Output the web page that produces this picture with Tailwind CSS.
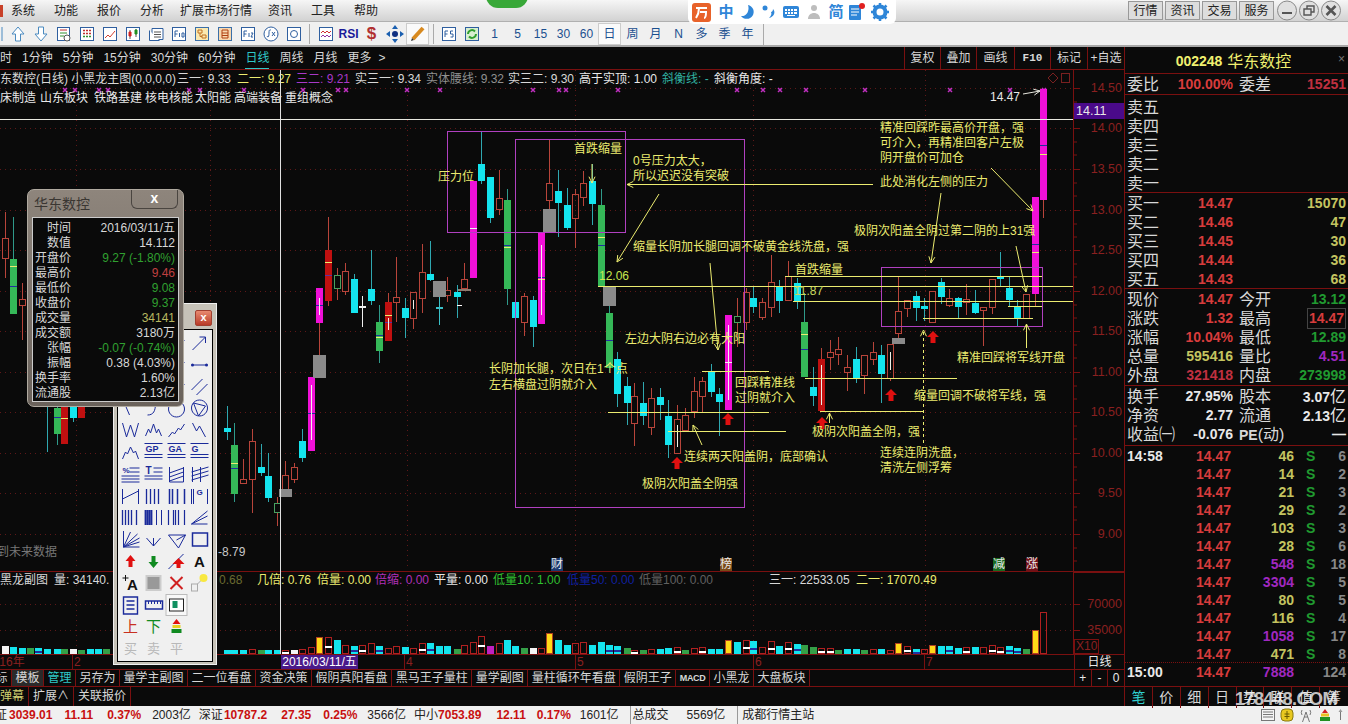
<!DOCTYPE html>
<html lang="zh">
<head>
    <meta charset="UTF-8">
    <title>华东数控</title>
    <script src="https://cdn.jsdelivr.net/npm/@tailwindcss/browser@4"></script>
</head>
<body class="relative w-[1348px] h-[724px] overflow-hidden bg-[#0a0a0a] text-[12px] text-[#d8d8d8] font-['Liberation_Sans','Noto_Sans_CJK_SC',sans-serif]">

    <!-- title bar -->
    <div class="relative h-[22px] flex items-center bg-linear-to-b from-[#f6f6f6] to-[#d2d2d2] text-[#222] border-b border-[#b0b0b0]">
        <div class="w-[3px] h-[12px] bg-[#c84028]"></div>
        <div class="flex ml-[8px] gap-[19px]">
            <span>系统</span><span>功能</span><span>报价</span><span>分析</span><span class="-ml-[3px] -mr-[3px]">扩展市场行情</span><span>资讯</span><span>工具</span><span>帮助</span>
        </div>
        <div class="absolute left-[486px] -top-[16px] w-[42px] h-[24px] rounded-full bg-[#38a838]"></div>
        <div class="ml-auto flex items-center gap-[2px] pr-[5px]">
            <span class="w-[35px] h-[19px] flex items-center justify-center border border-[#999] bg-[#ddd]">行情</span>
            <span class="w-[35px] h-[19px] flex items-center justify-center border border-[#999] bg-[#ddd]">资讯</span>
            <span class="w-[35px] h-[19px] flex items-center justify-center border border-[#999] bg-[#ddd]">交易</span>
            <span class="w-[35px] h-[19px] flex items-center justify-center border border-[#999] bg-[#ddd]">服务</span>
            <svg class="ml-[1px]" width="66" height="21" viewBox="0 0 66 21" fill="none">
                <circle cx="10" cy="10.5" r="9.5" fill="#e0e0e0" stroke="#888"/><path d="M5 13h10" stroke="#555" stroke-width="2"/>
                <circle cx="32" cy="10.5" r="9.5" fill="#e0e0e0" stroke="#888"/><path d="M27 9h7v6h-7zM30 9V6h7v6h-3" stroke="#555" stroke-width="1.4"/>
                <circle cx="54" cy="10.5" r="9.5" fill="#e0e0e0" stroke="#888"/><path d="M49.5 6l9 9M58.500 6l-9 9" stroke="#555" stroke-width="2.600"/>
            </svg>
        </div>
    </div>

    <!-- toolbar -->
    <div class="h-[25px] flex items-center bg-[#f0f0f0] border-b-2 border-[#a8a8a8] text-[#1a4f8f] -ml-[17px] w-[1365px]">
        <div class="w-[23px] flex justify-center"><svg width="18" height="18" fill="none" stroke="#4a8ac0"><path d="M16 2v14"/></svg></div>
        <div class="w-[23px] flex justify-center"><svg width="18" height="18" fill="#fff" stroke="#4a8ac0"><path d="M9 2l6 7h-3.500v7h-5V9H3z"/></svg></div>
        <div class="w-[23px] flex justify-center"><svg width="18" height="18" fill="#fff" stroke="#4a8ac0"><path d="M9 16l6-7h-3.500V2h-5v7H3z"/></svg></div>
        <div class="w-[23px] flex justify-center"><svg width="18" height="18" fill="#fff" stroke="#2f5f9f"><rect x="2.500" y="2.500" width="12" height="13"/><path d="M5 5h7" stroke="#c03030"/><path d="M5 8h7M5 11h4" stroke="#309030"/><circle cx="12" cy="13" r="3" stroke="#555"/></svg></div>
        <div class="w-[23px] flex justify-center"><svg width="18" height="18" fill="#fff" stroke="#2f5f9f"><rect x="2.500" y="2.500" width="13" height="13"/><path d="M5 5.500h8M5 8.500h8" stroke="#c03030" stroke-width="1.500" stroke-dasharray="2 1"/><path d="M5 11.500h8" stroke="#309030" stroke-width="1.500" stroke-dasharray="2 1"/></svg></div>
        <div class="w-[23px] flex justify-center"><svg width="18" height="18" fill="#fff" stroke="#2f5f9f"><rect x="2.500" y="2.500" width="13" height="13"/><path d="M4 13l3-3 2 2 5-6" stroke="#d04030" fill="none"/></svg></div>
        <div class="w-[23px] flex justify-center"><svg width="18" height="18" fill="#fff" stroke="#2f5f9f"><rect x="2.500" y="2.500" width="13" height="13"/><path d="M6 5v9M12 4v8" stroke="#555"/><path d="M5 7h2v4H5z" fill="#d02020" stroke="#d02020"/><path d="M11 5h2v4h-2z" fill="#209020" stroke="#209020"/></svg></div>
        <div class="w-[23px] flex justify-center"><svg width="18" height="18" fill="#fff" stroke="#2f5f9f"><path d="M5 3.500h11v11H5z"/><path d="M2.500 5.500v10h10"/><path d="M7 7h7M7 9.500h7M7 12h7" stroke="#555"/></svg></div>
        <div class="w-[23px] flex justify-center"><svg width="18" height="18" fill="#fff" stroke="#2f5f9f"><rect x="2.500" y="2.500" width="13" height="13"/><path d="M5 12V6h3M5 9h2.500M9.500 12V8M12 8v4h2V8z" stroke-width="1"/></svg></div>
        <div class="w-[23px] flex justify-center"><svg width="18" height="18" fill="#fbe9b0" stroke="#3a6fa8"><rect x="2.500" y="2.500" width="13" height="13"/><path d="M5 5h4v3H5zM9 10h4v3H9zM7 8v3.500h2" stroke="#c07020"/></svg></div>
        <div class="w-[23px] flex justify-center"><svg width="18" height="18" fill="#f8d8b0" stroke="#3a6fa8"><rect x="2.500" y="2.500" width="13" height="13"/><path d="M6 5h6v8H6zM6 8h6M6 10.500h6" stroke="#b04010" fill="none"/></svg></div>
        <div class="w-[23px] flex justify-center"><svg width="18" height="18" fill="#fff" stroke="#2f5f9f"><rect x="2.500" y="2.500" width="13" height="13"/><path d="M5 12V6h3M5 9h2.500M10 12V8M12 8h2l-2 4h2" stroke-width="1"/></svg></div>
        <div class="w-[23px] flex justify-center"><svg width="18" height="18" fill="#fff" stroke="#2f5f9f"><circle cx="9" cy="9" r="7"/><path d="M5 11c1 2 2 1 2-3s1-3 2-3M10 7l3 4M13 7l-3 4" fill="none" stroke-width="1"/></svg></div>
        <div class="w-[23px] flex justify-center"><svg width="18" height="18" fill="#fff" stroke="#2f5f9f"><rect x="2.500" y="2.500" width="13" height="13"/><circle cx="9" cy="9" r="3.500"/></svg></div>
        <div class="w-[9px] h-[20px] flex justify-center"><div class="w-px h-full bg-[#aaa]"></div></div>
        <div class="w-[23px] flex justify-center"><svg width="18" height="18" fill="#fff" stroke="#2f5f9f"><rect x="2.500" y="2.500" width="13" height="13"/><path d="M4 8l2-2 2 2 2-2 2 2 2-2" stroke="#d03030" fill="none"/><path d="M4 12l2-2 2 2 2-2 2 2 2-2" stroke="#9030a0" fill="none"/></svg></div>
        <div class="w-[23px] flex justify-center text-[12px] font-bold text-[#1a1a9a]">RSI</div>
        <div class="w-[23px] flex justify-center text-[17px] font-bold leading-none text-[#b03030]">$</div>
        <div class="w-[23px] flex justify-center"><svg width="20" height="20" fill="#1a5fb0"><path d="M10 1l3 4H7zM10 19l3-4H7zM1 10l4-3v6zM19 10l-4-3v6z"/><circle cx="10" cy="10" r="3" fill="#102f80"/></svg></div>
        <div class="w-[23px] h-[22px] flex justify-center items-center bg-[#fafafa] border border-[#ccc]"><svg width="18" height="18" fill="none"><path d="M4 14L14 3" stroke="#d88a20" stroke-width="4"/><path d="M2 16l1-3 2 2z" fill="#333"/></svg></div>
        <div class="w-[8px] h-[20px] flex justify-center"><div class="w-px h-full bg-[#aaa]"></div></div>
        <div class="w-[23px] flex justify-center"><svg width="18" height="18" fill="#fff" stroke="#2f5f9f"><rect x="2.500" y="2.500" width="13" height="13"/><path d="M5 12V6h3M5 9h2.500M13 6h-2.500v3H13v3h-2.500" stroke-width="1"/></svg></div>
        <div class="w-[23px] flex justify-center"><svg width="18" height="18" fill="#d8efd0" stroke="#2f5f9f"><rect x="2.500" y="2.500" width="13" height="13"/><path d="M5 9a4 4 0 0 1 7-2.500M13 9a4 4 0 0 1-7 2.500" stroke="#30a030" stroke-width="2" fill="none"/></svg></div>
        <div class="w-[23px] text-center">1</div>
        <div class="w-[23px] text-center">5</div>
        <div class="w-[23px] text-center">15</div>
        <div class="w-[23px] text-center">30</div>
        <div class="w-[23px] text-center">60</div>
        <div class="w-[23px] h-[22px] flex items-center justify-center bg-[#fafafa] border border-[#ccc]">日</div>
        <div class="w-[23px] text-center">周</div>
        <div class="w-[23px] text-center">月</div>
        <div class="w-[23px] text-center">N</div>
        <div class="w-[23px] text-center">多</div>
        <div class="w-[23px] text-center">季</div>
        <div class="w-[23px] text-center">年</div>
        <div class="w-[8px] h-[24px] flex justify-center"><div class="w-px h-full bg-[#aaa]"></div></div>
    </div>

    <div class="flex h-[659px]">
        <!-- chart column -->
        <div class="w-[1124px] flex flex-col">
            <div class="h-[23px] flex items-center border-b border-[#7a1010] overflow-hidden shrink-0">
                <div class="flex items-center gap-[10px] -ml-[12px]">
                    <span>分时</span><span>1分钟</span><span>5分钟</span><span>15分钟</span><span>30分钟</span><span>60分钟</span>
                    <span class="text-[#30c8c8] border-b border-[#30c8c8] h-[22px] leading-[22px]">日线</span>
                    <span>周线</span><span>月线</span><span>更多</span><span class="-ml-[3px]">&gt;</span>
                </div>
                <div class="ml-auto flex h-full">
                    <span class="w-[36px] flex items-center justify-center border-l border-[#7a1010]">复权</span>
                    <span class="w-[36px] flex items-center justify-center border-l border-[#7a1010]">叠加</span>
                    <span class="w-[38px] flex items-center justify-center border-l border-[#7a1010]">画线</span>
                    <span class="w-[36px] flex items-center justify-center border-l border-[#7a1010] font-['Liberation_Mono',monospace] font-bold text-[11px]">F10</span>
                    <span class="w-[37px] flex items-center justify-center border-l border-[#7a1010]">标记</span>
                    <span class="w-[37px] flex items-center justify-center border-l border-[#7a1010]">+自选</span>
                </div>
            </div>
            <svg id="chart" class="block shrink-0" width="1124" height="584" viewBox="0 70 1124 584"></svg>
            <!-- date axis -->
            <div class="relative h-[16px] flex border-y border-[#7a1010] text-[#8a2020] shrink-0">
                <div class="w-[1074px] relative overflow-hidden">
                    <span class="absolute -left-[14px] top-0 leading-[15px]">2016年</span>
                    <span class="absolute left-[72px] top-0 leading-[15px] border-l border-[#7a1010] pl-[1px]">2</span>
                    <span class="absolute left-[281px] top-0 h-[15px] w-[77px] leading-[15px] bg-[#4a1a8a] text-white text-center">2016/03/11/五</span>
                    <span class="absolute left-[404px] top-0 leading-[15px] border-l border-[#7a1010] pl-[1px]">4</span>
                    <span class="absolute left-[575px] top-0 leading-[15px] border-l border-[#7a1010] pl-[1px]">5</span>
                    <span class="absolute left-[753px] top-0 leading-[15px] border-l border-[#7a1010] pl-[1px]">6</span>
                    <span class="absolute left-[924px] top-0 leading-[15px] border-l border-[#7a1010] pl-[1px]">7</span>
                </div>
                <div class="flex-1 border-l border-[#7a1010] text-center text-[#e8e8e8] leading-[15px]">日线</div>
            </div>
            <!-- tabs -->
            <div class="h-[17px] flex border-b border-[#7a1010] shrink-0 overflow-hidden">
                <div class="w-[1074px] overflow-hidden"><div class="flex -ml-[8px]" id="tabs"></div></div>
                <div class="flex flex-1 border-l border-[#7a1010] text-[#e8e8e8] text-center">
                    <span class="flex-1 border-r border-[#7a1010] leading-[16px]">+</span>
                    <span class="flex-1 border-r border-[#7a1010] leading-[16px]">-</span>
                    <span class="flex-1 leading-[16px]">0</span>
                </div>
            </div>
            <div class="flex-1 flex items-stretch overflow-hidden">
                <span class="pr-[4px] border-r border-[#7a1010] text-[#d0d070] leading-[18px]">弹幕</span>
                <span class="px-[4px] border-r border-[#7a1010] leading-[18px]">扩展∧</span>
                <span class="px-[4px] border-r border-[#7a1010] leading-[18px]">关联报价</span>
            </div>
        </div>

        <!-- quote panel -->
        <div class="flex-1 border-l border-[#7a1010] relative flex flex-col font-bold">
            <span class="absolute right-[3px] top-[3px] text-[#777] font-normal text-[12px]">×</span>
            <div class="h-[27px] pt-[3px] flex items-center justify-center text-[#f0f070] border-b border-[#7a1010] gap-[5px] pr-[6px] shrink-0">
                <span class="text-[14px]">002248</span><span class="text-[16px] font-normal">华东数控</span>
            </div>
            <div id="q1" class="h-[21px] pt-[1px] border-b border-[#7a1010] shrink-0"></div>
            <div id="q2" class="h-[98px] pt-[3px] border-b border-[#7a1010] shrink-0"></div>
            <div id="q3" class="h-[96px] pt-[1px] border-b border-[#7a1010] shrink-0"></div>
            <div id="q4" class="h-[97px] pt-[1px] border-b border-[#7a1010] shrink-0"></div>
            <div id="q5" class="h-[60px] pt-[1px] border-b border-[#7a1010] shrink-0"></div>
            <div id="trades" class="h-[217px] pt-[1px] border-b border-dotted border-[#7a1010] shrink-0"></div>
            <div id="lastTrade" class="h-[24px] border-b border-[#7a1010] shrink-0"></div>
            <div class="flex-1 grid grid-cols-8 font-normal text-[14px]">
                <span class="text-center text-[#30d0d0] border-r border-[#7a1010]">笔</span>
                <span class="text-center border-r border-[#7a1010]">价</span>
                <span class="text-center border-r border-[#7a1010]">细</span>
                <span class="text-center border-r border-[#7a1010]">日</span>
                <span class="text-center border-r border-[#7a1010]">势</span>
                <span class="text-center border-r border-[#7a1010]">联</span>
                <span class="text-center border-r border-[#7a1010]">值</span>
                <span class="text-center">筹</span>
            </div>
        </div>
    </div>

    <!-- status bar -->
    <div class="h-[18px] flex items-center bg-[#f0f0f0] text-[#222] whitespace-nowrap">
        <span class="-ml-[17px]">上证</span><span class="font-bold text-[#c81010] ml-[2px]">3039.01</span>
        <span class="font-bold text-[#c81010] ml-[12px]">11.11</span><span class="font-bold text-[#c81010] ml-[14px]">0.37%</span>
        <span class="ml-[11px]">2003亿</span><span class="ml-[8px]">深证</span><span class="font-bold text-[#c81010] ml-[1px]">10787.2</span>
        <span class="font-bold text-[#c81010] ml-[14px]">27.35</span><span class="font-bold text-[#c81010] ml-[12px]">0.25%</span>
        <span class="ml-[10px]">3566亿</span><span class="ml-[8px]">中小</span><span class="font-bold text-[#c81010]">7053.89</span>
        <span class="font-bold text-[#c81010] ml-[15px]">12.11</span><span class="font-bold text-[#c81010] ml-[11px]">0.17%</span>
        <span class="ml-[9px]">1601亿</span>
        <span class="ml-[11px] pl-[2px] border-l border-[#999]">总成交</span><span class="ml-[18px]">5569亿</span>
        <span class="ml-[12px] pl-[4px] border-l border-[#999]">成都行情主站</span>
        <div class="ml-auto flex items-center gap-[5px] pr-[4px]">
            <svg width="14" height="14" fill="#f4f4f4" stroke="#777"><rect x="0.500" y="1.500" width="13" height="11"/><path d="M2 4h10M2 6.500h10M2 9h10"/></svg>
            <svg width="14" height="14"><rect x="1" y="1" width="12" height="12" rx="4" fill="#e8c820" stroke="#8a7a10"/><path d="M7 3v8M4.500 6h5M4.500 8.500h5" stroke="#6a5a00"/></svg>
            <svg width="14" height="16" fill="none" stroke="#777"><path d="M7 5L3.500 15M7 5l3.500 10M5 10h4M3 3a5 5 0 0 0 0 5M11 3a5 5 0 0 1 0 5"/></svg>
            <svg width="14" height="14"><path d="M7 1l3 4H4z" fill="#d02020"/><path d="M3 5.500h8v3H3z" fill="#e8c020"/><path d="M2 9h10v4H2z" fill="#209020"/></svg>
            <svg width="7" height="14"><path d="M3.500 1l2 3h-4z" fill="#999"/><path d="M3.500 4v8" stroke="#777"/></svg>
        </div>
    </div>

    <!-- watermark -->
    <div class="absolute left-[1235px] top-[687px] w-[92px] h-[24px] leading-[24px] text-center font-bold text-[18px] text-[#f4f4f4]/80 tracking-[-0.5px]">178448.COM</div>

    <!-- floating ime bar -->
    <div class="absolute left-[688px] top-0 w-[208px] h-[24px] bg-white rounded-b-md flex items-center pl-[4px]">
        <svg width="19" height="19" viewBox="0 0 19 19"><rect width="19" height="19" rx="3" fill="#e8622a"/><path d="M4 5h11M7 5c0 4-1 7-3 10M8 9h6c0 3-.5 6-2 6" stroke="#fff" stroke-width="2" fill="none"/></svg>
        <span class="ml-[3px] w-[24px] text-center text-[#2f86d8] text-[15px] font-bold">中</span>
        <svg width="18" height="18" viewBox="0 0 18 18"><path d="M10 2a7 7 0 1 1-7 11c5 1 9-5 7-11z" fill="#2f86d8"/></svg>
        <svg class="ml-[4px]" width="18" height="18" viewBox="0 0 18 18"><circle cx="5" cy="5" r="2.500" fill="#2f86d8"/><path d="M13 6c3 3 1 8-4 9 2-2 3-4 2-6 1 0 2-1 2-3z" fill="#2f86d8"/></svg>
        <svg class="ml-[4px]" width="18" height="18" viewBox="0 0 18 18" fill="#2f86d8"><rect x="1" y="3" width="16" height="12" rx="2"/><path d="M3 6h2v2H3zM6 6h2v2H6zM9 6h2v2H9zM12 6h3v2h-3zM3 9h2v2H3zM6 9h2v2H6zM9 9h2v2H9zM12 9h3v2h-3zM5 12h8v1H5z" fill="#fff"/></svg>
        <svg class="ml-[5px]" width="18" height="18" viewBox="0 0 18 18" fill="#bdbdbd"><circle cx="9" cy="5" r="3"/><path d="M3 16c0-4 3-6 6-6s6 2 6 6z"/></svg>
        <span class="ml-[2px] w-[22px] text-center text-[#2f86d8] text-[15px] font-bold">简</span>
        <svg width="20" height="20" viewBox="0 0 20 20"><rect x="2" y="3" width="12" height="15" rx="1" fill="#2f86d8"/><path d="M4 7h8M4 10h8M4 13h6" stroke="#fff"/><circle cx="15" cy="4" r="3" fill="#e02020"/></svg>
        <svg class="ml-[3px]" width="20" height="20" viewBox="0 0 20 20"><circle cx="10" cy="10" r="5.500" fill="none" stroke="#2f86d8" stroke-width="4"/><path d="M10 1v3M10 16v3M1 10h3M16 10h3M3.500 3.500l2 2M14.500 14.500l2 2M3.500 16.500l2-2M14.500 5.500l2-2" stroke="#2f86d8" stroke-width="2.500"/></svg>
    </div>

    <!-- drawing palette -->
    <div class="absolute left-[113px] top-[303px] w-[104px] h-[362px] bg-[#c6c2b8] border border-[#f0f0f0] p-[3px]">
        <div class="h-[22px] flex justify-end items-center pr-[1px]">
            <div class="w-[17px] h-[16px] rounded-[2px] bg-linear-to-b from-[#e88a70] to-[#b83a28] border border-[#a04030] text-white text-[11px] font-bold leading-[13px] text-center">x</div>
        </div>
        <div class="h-[333px] bg-[#f0f0f0] border border-black pt-[2px] pl-[1px]">
            <div id="tools" class="grid grid-cols-4 auto-rows-[21.8px] w-[92px]"></div>
        </div>
    </div>

    <!-- bar info window -->
    <div class="absolute left-[27px] top-[189px] w-[157px] h-[218px] rounded-[7px] bg-linear-to-b from-[#8e857c] to-[#6a625b] border border-[#b0aaa0] p-[4px] pt-0">
        <div class="h-[27px] relative text-[14px] text-[#3a3632] leading-[28px] pl-[2px]">华东数控
            <div class="absolute right-[1px] top-0 w-[47px] h-[19px] border border-t-0 border-[#4a4540] rounded-b-md text-white font-bold text-center leading-[16px] text-[14px]">x</div>
        </div>
        <div id="infoRows" class="h-[185px] bg-[#0a0a0a] border border-[#ccc] pr-[3px] pt-[3px]"></div>
    </div>

    <script>
        // C: x, high, top, bottom, low, candle type, volume height, volume type
        const C = [
            [5,212,238,258,278,'h',8,'w'],[13,217,259,313,313,'g',7,'c'],[22,283,299,305,340,'h',6,'c'],
            [47,380,380,405,452,'c',5,'c'],[57,380,408,433,445,'g',5,'c'],[64,380,385,443,443,'r',5,'g'],[73,380,385,417,422,'c',5,'w'],[81,380,385,417,417,'r',4,'g'],
            [227,406,428,431,440,'c',4,'c'],[234,423,445,493,502,'g',4,'c'],[243,459,479,483,483,'h',4,'c'],[252,429,441,479,513,'h',5,'h'],
            [261,444,467,472,476,'c',4,'g'],[268,453,476,497,502,'c',4,'c'],[277,497,503,512,526,'j',4,'c'],[285,461,475,489,489,'h',4,'H'],
            [294,463,467,479,483,'h',4,'w'],[302,429,441,457,462,'c',5,'h'],[311,377,377,450,450,'m',7,'h'],[319,288,288,322,355,'m',17,'y'],
            [328,217,250,300,306,'r',17,'H'],[337,268,275,288,300,'j',14,'c'],[345,263,271,291,295,'h',9,'h'],[354,274,279,312,312,'c',8,'C'],
            [362,296,306,307,327,'x',9,'H'],[371,250,289,300,305,'c',11,'h'],[379,305,322,350,363,'g',8,'C'],[388,293,302,340,340,'r',6,'h'],
            [396,257,297,302,322,'h',8,'h'],[405,298,308,317,338,'c',7,'c'],[413,292,292,318,329,'h',6,'h'],[422,244,272,298,313,'h',11,'H'],
            [430,241,274,279,281,'c',11,'C'],[439,297,307,308,325,'t',8,'c'],[447,277,290,295,302,'h',8,'c'],[457,285,292,296,318,'c',5,'g'],
            [464,263,279,288,288,'h',9,'h'],[473,181,181,277,277,'m',12,'h'],[481,131,164,180,184,'c',18,'H'],[490,177,177,217,223,'c',8,'M'],
            [499,170,198,209,215,'h',11,'h'],[507,189,200,288,305,'g',14,'c'],[515,283,302,317,320,'c',8,'c'],[524,293,296,322,336,'h',6,'g'],
            [533,296,300,326,347,'c',6,'w'],[541,233,233,323,323,'m',6,'h'],[549,139,183,200,209,'h',21,'y'],[558,170,191,202,237,'c',14,'c'],
            [567,188,205,227,230,'c',9,'c'],[575,189,194,218,248,'h',11,'h'],[583,171,183,197,206,'h',12,'h'],[592,164,181,203,225,'c',9,'c'],
            [601,189,205,285,285,'g',12,'c'],[609,305,313,367,367,'g',9,'C'],[617,352,359,393,407,'c',8,'C'],[627,377,386,402,425,'c',6,'g'],
            [634,383,396,423,446,'h',4,'H'],[643,382,403,415,425,'c',4,'g'],[651,388,398,427,435,'h',5,'h'],[660,388,397,404,420,'c',5,'c'],
            [668,400,416,444,458,'c',6,'c'],[677,405,419,453,453,'h',7,'H'],[685,408,415,430,430,'h',4,'g'],[694,377,391,411,418,'h',6,'h'],
            [702,377,381,396,412,'h',7,'H'],[711,364,371,391,397,'c',5,'c'],[719,388,394,401,436,'c',5,'c'],[728,315,315,409,409,'m',14,'y'],
            [737,298,316,322,347,'j',12,'c'],[746,288,292,322,330,'h',14,'H'],[753,286,298,306,313,'c',13,'C'],[762,298,302,317,320,'h',7,'h'],
            [771,255,282,307,317,'h',13,'H'],[779,280,286,300,313,'c',8,'c'],[788,261,276,300,300,'h',12,'H'],[797,278,283,300,309,'c',10,'C'],
            [804,293,322,376,376,'g',9,'g'],[813,367,387,395,406,'c',7,'g'],[821,348,359,410,410,'r',6,'H'],[830,340,352,357,370,'h',6,'H'],
            [838,337,349,354,365,'h',4,'g'],[847,355,367,372,391,'h',5,'c'],[856,347,359,377,383,'c',5,'c'],[864,355,355,375,394,'h',4,'g'],
            [873,342,352,359,365,'h',5,'h'],[881,345,355,373,403,'c',5,'c'],[890,344,344,378,381,'h',4,'h'],[898,276,311,333,338,'h',11,'y'],
            [907,300,300,308,317,'h',8,'H'],[916,291,296,307,321,'c',5,'C'],[924,298,306,308,321,'c',5,'h'],[932,291,291,322,322,'h',9,'y'],
            [941,278,282,296,304,'c',8,'c'],[949,289,298,305,307,'h',8,'C'],[958,297,298,306,318,'c',6,'c'],[966,284,299,302,315,'h',7,'H'],
            [975,290,303,312,314,'c',7,'c'],[983,307,307,310,346,'h',7,'h'],[992,279,279,307,314,'h',9,'H'],[1000,252,276,278,286,'c',7,'H'],
            [1009,277,288,299,307,'c',8,'C'],[1017,300,306,317,327,'c',6,'C'],[1026,294,294,318,318,'h',5,'g'],[1035,197,197,293,306,'m',24,'y'],
            [1043,89,89,199,218,'m',42,'h']
        ];
        const STYLE = {
            h: ['#b8443a', 'none', '#b8443a'], r: ['#b8443a', '#c01010', '#c01010'], c: ['#2fa8b0', '#14e4ee', '#14e4ee'],
            g: ['#2f9a8a', '#35b858', '#35b858'], m: ['#b8443a', '#f010d8', '#f010d8'], j: ['#b8443a', 'none', '#4aa060'],
            x: ['#f0f0f0', '#f0f0f0', '#f0f0f0'], t: ['#3ac0c8', '#3ac0c8', '#3ac0c8']
        };
        const PURPLE = '#b040c0', YEL = '#ecec70', GRID = '#5e1818', AXIS = '#7a1010', AXTXT = '#8a2020';
        let s = '';
        const t = (x, cy, str, fill, size = 12, weight = 'normal') =>
            `<text x="${x}" y="${cy + 4}" fill="${fill}" font-size="${size}" font-weight="${weight}" xml:space="preserve">${str}</text>`;
        const line = (a, b, c, d, col, dash) => `<path d="M${a} ${b}L${c} ${d}" stroke="${col}" fill="none"${dash ? ` stroke-dasharray="${dash}"` : ''}/>`;
        const arrow = (a, b, c, d, col = YEL) => {
            const ang = Math.atan2(d - b, c - a), L = 7;
            const p = (o) => `${c - L * Math.cos(ang + o)} ${d - L * Math.sin(ang + o)}`;
            return line(a, b, c, d, col) + `<path d="M${p(0.45)}L${c} ${d}L${p(-0.45)}" stroke="${col}" fill="none"/>`;
        };

        // grid
        for (const y of [88, 128, 169, 210, 250, 291, 331, 372, 412, 453, 493, 534]) s += line(0, y + .5, 1073, y + .5, GRID, '1 4');
        for (const y of [604, 630]) s += line(0, y + .5, 1073, y + .5, GRID, '1 4');
        for (const x of [76, 210, 407, 575, 753, 925]) { s += line(x + .5, 70, x + .5, 570, GRID, '1 4'); s += line(x + .5, 580, x + .5, 654, GRID, '1 4'); }

        // purple x markers
        for (const x of [65,75,99,108,189,200,244,303,338,346,407,440,533,559,566,618,737,763,780,806,865,950,1010,1044])
            s += `<path d="M${x-2} 88l4 4M${x+2} 88l-4 4" stroke="#c030c0" stroke-width="1.500"/>`;

        // candles: 7px wide bodies, hollow ones keep the wick outside the body
        for (const [x, hi, top, bot, lo, ty] of C) {
            const st = STYLE[ty];
            s += line(x + .5, hi, x + .5, top, st[0]) + line(x + .5, bot, x + .5, lo, st[0]);
            s += `<rect x="${x - 2.5}" y="${top + .5}" width="6" height="${Math.max(bot - top, 1)}" fill="${st[1]}" stroke="${st[2]}"/>`;
        }
        // gray blocks
        for (const [x, y, w, h] of [[279,489,13,8],[313,355,13,23],[433,281,13,16],[543,209,13,24],[603,286,13,20],[892,338,13,6]])
            s += `<rect x="${x}" y="${y}" width="${w}" height="${h}" fill="#8a8a8a"/>`;
        s += `<rect x="458" y="289" width="13" height="2" fill="#8a7a70"/>`;
        // ticks and white core lines inside the bars
        for (const [x, y, c] of [[13,266,YEL],[13,286,'#2030a0'],[64,418,YEL],[57,417,'#2030a0'],[234,463,YEL],[234,468,'#2030a0'],[311,413,'#2030a0'],[319,305,'#2030a0'],[328,262,YEL],[328,275,'#6030a0'],[379,335,'#2030a0'],[379,337,YEL],[388,315,YEL],[388,322,'#6030a0'],[473,228,'#f0f0f0'],[507,245,'#2030a0'],[507,247,YEL],[541,277,'#2030a0'],[541,279,YEL],[601,237,YEL],[601,245,'#2030a0'],[609,340,'#2030a0'],[728,362,'#f0f0f0'],[804,334,YEL],[804,349,'#2030a0'],[1043,145,'#2030a0'],[1043,154,YEL],[1035,244,'#2030a0'],[1035,252,YEL]])
            s += line(x - 3, y + .5, x + 4, y + .5, c);
        for (const [x, a, b] of [[311,385,440],[319,298,315],[388,318,330],[541,245,315],[677,425,447],[728,325,400],[821,365,405],[890,352,370],[413,300,309]])
            s += line(x + .5, a, x + .5, b, '#f0f0e8');
        s += line(457, 305.5, 462, 305.5, '#fff');

        // highlighted boxes
        s += `<rect x="447.500" y="131.500" width="178" height="101" fill="none" stroke="${PURPLE}"/>`;
        s += `<rect x="515.500" y="139.500" width="229" height="368" fill="none" stroke="${PURPLE}"/>`;
        s += `<rect x="881.500" y="267.500" width="161" height="59" fill="none" stroke="${PURPLE}"/>`;

        // support lines
        for (const [a, y, b] of [[785,276,1042],[598,286,1073],[793,301,1073],[1008,306,1042],[923,318,1033],[702,371,769],[805,378,957],[608,412,769],[820,411,923],[668,431,786]])
            s += line(a, y + .5, b, y + .5, YEL);
        s += line(0, 119.5, 1073, 119.5, '#e8e8e0');
        s += arrow(873, 184.500, 627, 184.500);
        s += arrow(659, 194, 617, 262);
        s += arrow(710, 263, 718, 350);
        s += arrow(702, 445, 693, 425);
        s += arrow(592, 164, 592, 183);
        s += arrow(991, 168, 1033, 211);
        s += arrow(941, 193, 931, 263);
        s += arrow(1016, 246, 1026, 292);
        s += arrow(1026.500, 348, 1026.500, 324);
        s += arrow(829.500, 423, 829.500, 413);
        s += arrow(1023, 94, 1040, 91, '#e8e8e0');
        s += arrow(923.500, 443, 923.500, 330).replace(/<path d="M923/, '<path stroke-dasharray="3 3" d="M923');

        // red up arrows
        for (const [x, y] of [[728,419],[677,463],[891,395],[933,337],[822,423]])
            s += `<path d="M${x} ${y-6}l6 6h-3.500v6h-5v-6h-3.500z" fill="#e01010"/>`;

        // annotations
        for (const [x, cy, str] of [[438,177,'压力位'],[574,149,'首跌缩量'],[633,161,'0号压力太大，'],[633,176,'所以迟迟没有突破'],[633,247,'缩量长阴加长腿回调不破黄金线洗盘，强'],
            [625,339,'左边大阴右边必有大阳'],[489,369,'长阴加长腿，次日在1个点'],[489,385,'左右横盘过阴就介入'],[735,383,'回踩精准线'],[735,398,'过阴就介入'],[684,457,'连续两天阳盖阴，底部确认'],[642,484,'极阴次阳盖全阴强'],
            [880,128,'精准回踩昨最高价开盘，强'],[880,143,'可介入，再精准回客户左极'],[880,158,'阴开盘价可加仓'],[880,182,'此处消化左侧的压力'],[854,231,'极阴次阳盖全阴过第二阴的上31强'],
            [795,270,'首跌缩量'],[957,358,'精准回踩将军线开盘'],[914,396,'缩量回调不破将军线，强'],[812,432,'极阴次阳盖全阴，强'],[880,453,'连续连阴洗盘，'],[880,468,'清洗左侧浮筹']])
            s += t(x, cy, str, YEL);
        s += t(599, 276, '12.06', '#c8e850') + t(794, 291, '11.87', '#c8d860');
        s += t(990, 97, '14.47', '#e8e8e8') + t(218, 552, '-8.79', '#c8c8c8');
        s += t(-3, 552, '到未来数据', '#777');

        // header rows over the chart
        for (const [x, str, c] of [[-12,'华东数控(日线) 小黑龙主图(0,0,0,0)','#d8d8d8'],[177,'三一: 9.33','#d8d8d8'],[237,'二一: 9.27','#ecec70'],[296,'三二: 9.21','#a838c8'],[355,'实三一: 9.34','#d8d8d8'],[426,'实体腰线: 9.32','#909090'],[508,'实三二: 9.30','#d8d8d8'],[579,'高于实顶: 1.00','#e8e8e8'],[662,'斜衡线: -','#30b0a0'],[714,'斜衡角度: -','#e8e8e8']])
            s += t(x, 79, str, c);
        for (const [x, str] of [[0,'床制造'],[40,'山东板块'],[94,'铁路基建'],[145,'核电核能'],[195,'太阳能'],[234,'高端装备'],[285,'重组概念']])
            s += t(x, 98, str, '#e8e8e8');
        s += `<path d="M1053 73l5 5-5 5-5-5z" fill="none" stroke="#7a2020"/><rect x="1061.500" y="73.500" width="8" height="9" fill="none" stroke="#7a2020"/>`;

        // event tags
        for (const [x, str, bg] of [[551,'财','#1a3a70'],[720,'榜','#7a4a18'],[993,'减','#1a6a20'],[1026,'涨','#701018']])
            s += `<rect x="${x}" y="558" width="12" height="13" fill="${bg}"/>` + t(x, 564, str, '#e8e8e8');

        // price axis
        s += line(1073.500, 70, 1073.500, 654, AXIS) + line(0, 571.500, 1124, 571.500, AXIS) + line(1074, 572.500, 1124, 572.500, AXIS);
        const prices = [['14.50',88],['14.00',128],['13.50',169],['13.00',210],['12.50',250],['12.00',291],['11.50',331],['11.00',372],['10.50',412],['10.00',453],['9.50',493],['9.00',534]];
        for (const [p, y] of prices) {
            s += line(1074, y + .5, 1080, y + .5, AXIS) + line(1074, y + 14, 1077, y + 14, AXIS) + line(1074, y + 27, 1077, y + 27, AXIS);
            s += `<text x="1122" y="${y + 4}" text-anchor="end" fill="${AXTXT}" font-size="12.500">${p}</text>`;
        }
        s += `<rect x="1074" y="103" width="50" height="16" fill="#4a0a8a"/>` + t(1076, 111, '14.11', '#e8e8e8', 12.5);

        // volume panel
        for (const [x, str, c] of [[-12,'小黑龙副图','#d8d8d8'],[54,'量: 34140.','#d8d8d8'],[219,'0.68','#6a6a30'],[257,'几倍: 0.76','#ecec70'],[317,'倍量: 0.00','#ecec70'],[375,'倍缩: 0.00','#b030b8'],[434,'平量: 0.00','#e8e8e8'],[493,'低量10: 1.00','#30c030'],[567,'低量50: 0.00','#1020a0'],[639,'低量100: 0.00','#606060'],[769,'三一: 22533.05','#d8d8d8'],[856,'二一: 17070.49','#ecec70']])
            s += t(x, 580, str, c);
        for (const [x, h, ty] of [[30,6,'g'],[38,6,'C'],[90,5,'c'],[98,5,'c'],[106,5,'g']]) C.push([x,0,0,0,0,'',h,ty]);
        for (const [x, , , , , , h, ty] of C) {
            const y = 654 - h;
            const bx = x - 3, dash = (c) => `<rect x="${bx}" y="${y + Math.round(h / 2)}" width="7" height="2" fill="${c}"/>`;
            if (ty === 'h' || ty === 'H') {
                s += `<rect x="${bx + .5}" y="${y + .5}" width="6" height="${h - 1}" fill="none" stroke="#b02020"/>`;
                if (ty === 'H') s += dash('#fff');
            } else if (ty === 'y') {
                s += `<rect x="${bx + .5}" y="${y + .5}" width="6" height="${h - 1}" fill="#ffd818" stroke="#b04020"/>`;
            } else if (ty === 'w') {
                s += `<rect x="${bx}" y="${y}" width="7" height="${h}" fill="#f4f4f4"/>`;
            } else if (ty === 'C') {
                s += `<rect x="${bx}" y="${y}" width="7" height="${h}" fill="#14e4ee"/>` + dash('#2030a0');
            } else if (ty === 'M') {
                s += `<rect x="${bx}" y="${y}" width="7" height="${h}" fill="#c020c0"/>`;
            } else {
                s += `<rect x="${bx}" y="${y}" width="7" height="${h}" fill="${ty === 'g' ? '#35a048' : '#14e4ee'}"/>`;
            }
        }
        s += `<rect x="1074.500" y="639.500" width="24" height="14" fill="none" stroke="${AXIS}"/>` + t(1076, 646, 'X10', '#8a2020');
        s += `<text x="1122" y="608" text-anchor="end" fill="${AXTXT}" font-size="12.500">70000</text><text x="1122" y="634" text-anchor="end" fill="${AXTXT}" font-size="12.500">35000</text>`;
        s += line(1074, 604.500, 1080, 604.500, AXIS) + line(1074, 630.500, 1080, 630.500, AXIS);

        // crosshair
        s += line(280.500, 70, 280.500, 654, '#e0e0e0');
        document.getElementById('chart').innerHTML = s;

        // bottom tabs
        const tabs = ['标','模板','管理','另存为','量学主副图','二一位看盘','资金决策','假阴真阳看盘','黑马王子量柱','量学副图','量柱循环年看盘','假阴王子','MACD','小黑龙','大盘板块'];
        document.getElementById('tabs').innerHTML = tabs.map((n) => {
            const cls = n === '管理' ? 'text-[#30c8c8]' : n === '模板' ? 'bg-[#2a2a2a]' : n === 'MACD' ? 'font-bold text-[9px] tracking-[-0.3px]' : '';
            return `<span class="px-[3.500px] border-r border-[#7a1010] leading-[16px] whitespace-nowrap ${cls}">${n}</span>`;
        }).join('');

        // quote panel rows
        const RED = 'text-[#d83c3c]', DRED = 'text-[#c03040]', OLV = 'text-[#c4c460]', GRN = 'text-[#209a30]', PUR = 'text-[#a028c0]', WHT = 'text-[#e8e8e8]';
        const row = (a, av, ac, b, bv, bc, extra = '') =>
            `<div class="h-[19px] flex items-center relative">
                <span class="absolute left-[2px] font-normal text-[16px] leading-[19px]">${a}</span>
                <span class="absolute right-[115px] text-[14px] leading-[19px] ${ac}">${av}</span>
                <span class="absolute left-[114px] font-normal text-[16px] leading-[19px]">${b}</span>
                <span class="absolute right-[2px] text-[14px] leading-[19px] ${bc} ${extra}">${bv}</span>
            </div>`;
        const q1 = document.getElementById('q1');
        q1.innerHTML = row('委比', '100.00%', RED, '委差', '15251', DRED);
        document.getElementById('q2').innerHTML = ['卖五','卖四','卖三','卖二','卖一'].map((n) => row(n, '', '', '', '', '')).join('');
        document.getElementById('q3').innerHTML = [['买一','14.47','15070'],['买二','14.46','47'],['买三','14.45','30'],['买四','14.44','36'],['买五','14.43','68']]
            .map(([n, p, v]) => row(n, p, RED, '', v, OLV)).join('');
        document.getElementById('q4').innerHTML =
            row('现价', '14.47', RED, '今开', '13.12', GRN) +
            row('涨跌', '1.32', RED, '最高', '14.47', RED, 'border border-[#444] px-[1px] leading-[15px] right-[0px]') +
            row('涨幅', '10.04%', RED, '最低', '12.89', GRN) +
            row('总量', '595416', OLV, '量比', '4.51', PUR) +
            row('外盘', '321418', DRED, '内盘', '273998', GRN);
        document.getElementById('q5').innerHTML =
            row('换手', '27.95%', WHT, '股本', '3.07<span class="font-normal text-[16px]">亿</span>', WHT) +
            row('净资', '2.77', WHT, '流通', '2.13<span class="font-normal text-[16px]">亿</span>', WHT) +
            row('收益㈠', '-0.076', WHT, '<span class="font-bold text-[14px]">PE</span>(动)', '—', WHT);
        const trade = (time, v, vc, n) =>
            `<div class="h-[18px] relative text-[14px] leading-[18px]">
                <span class="absolute left-[2px] text-[#e8e8e8]">${time}</span>
                <span class="absolute right-[117px] ${RED}">14.47</span>
                <span class="absolute right-[54px] ${vc}">${v}</span>
                <span class="absolute left-[181px] text-[#209a30]">S</span>
                <span class="absolute right-[2px] text-[#888]">${n}</span>
            </div>`;
        document.getElementById('trades').innerHTML = [[46,6],[14,2],[21,3],[29,2],[103,3],[28,6],[548,18],[3304,5],[80,5],[116,4],[1058,17],[471,8]]
            .map(([v, n], i) => trade(i ? '' : '14:58', v, v >= 500 && v !== 471 ? PUR : OLV, n)).join('');
        document.getElementById('lastTrade').innerHTML = trade('15:00', 7888, PUR, 124).replace(/<span class="absolute left-\[181px\][^\n]*\n/, '');

        // info window rows
        const info = [['时间','2016/03/11/五','text-[#d8d8d8]'],['数值','14.112','text-[#d8d8d8]'],['开盘价','9.27 (-1.80%)','text-[#30a030]'],['最高价','9.46','text-[#c04040]'],['最低价','9.08','text-[#30a030]'],['收盘价','9.37','text-[#30a030]'],['成交量','34141','text-[#b8b860]'],['成交额','3180万','text-[#d8d8d8]'],['张幅','-0.07 (-0.74%)','text-[#30a030]'],['振幅','0.38 (4.03%)','text-[#d8d8d8]'],['换手率','1.60%','text-[#d8d8d8]'],['流通股','2.13亿','text-[#d8d8d8]']];
        document.getElementById('infoRows').innerHTML = info.map(([a, b, c]) =>
            `<div class="h-[15px] flex justify-between leading-[15px]"><span class="w-[38px] text-right">${a}</span><span class="${c}">${b}</span></div>`).join('');

        // drawing palette icons
        const N = '#1a2a9a';
        const P = (d, w = 1) => `<path d="${d}" stroke="${N}" stroke-width="${w}" fill="none"/>`;
        const L = (x) => `<text x="11" y="16" text-anchor="middle" font-size="13" fill="${x[1]}" font-weight="${x[2] || 'normal'}">${x[0]}</text>`;
        const gLabel = (g) => `<text x="3" y="11" font-size="9" fill="${N}" font-weight="bold">${g}</text>` + P('M2 2.500h18M2 13.500h18M2 16.500h18');
        const tools = [
            P('M4 18L17 5M11 5h6v6'), P('M3 11h16') + `<circle cx="4" cy="11" r="1.500" fill="${N}"/><circle cx="18" cy="11" r="1.500" fill="${N}"/>`, P('M3 14L14 3M8 19L19 8'), P('M4 18L17 5M11 5h6v6'),
            P('M4 18L17 5M11 5h6v6'), P('M3 11h16'), P('M3 14L14 3M8 19L19 8'), P('M3 11h16') + `<circle cx="4" cy="11" r="1.500" fill="${N}"/><circle cx="18" cy="11" r="1.500" fill="${N}"/>`,
            P('M4 18L17 5'), P('M3 11h16'), P('M3 14L14 3M8 19L19 8'), P('M3 14L14 3M8 19L19 8'),
            P('M4 4l6 14'), P('M5 18c6 0 8-4 8-12'), P('M11 4a8 8 0 1 0 .01 0'), P('M11 3a8 8 0 1 0 .01 0M5 6l12 3-7 10z'),
            P('M3 4l4 14 4-12 4 12 4-14'), P('M3 17l3-7 2 4 3-9 3 9 2-4 3 7'), P('M3 18l4-5 2 2 4-6 2 2 4-6'), P('M4 4l4 8 3-5 6 11'),
            P('M3 18l3-7 2 2 3-7 3 6 2-2 3 8'), gLabel('GP'), gLabel('GA'), gLabel('G'),
            `<text x="3" y="10" font-size="8" fill="${N}" font-weight="bold">%</text>` + P('M10 5h10M10 9h10M2 13h18M2 16h18M2 19h18'), `<text x="3" y="11" font-size="10" fill="${N}" font-weight="bold">T</text>` + P('M11 5h9M11 9h9M2 13h18M2 16h18'), P('M4 4v15h14V4M4 10l14-5M4 14l14-5M4 18l14-5'), P('M4 4v15M12 4v15M3 9l17-5M3 13l17-5M3 17l17-5'),
            P('M3 4v15M19 4v15M3 14l16-8'), P('M4 4v15M8 4v15M12 4v15M16 4v15',1.300), P('M4 4v15M7 4v15M12 4v15M19 4v15',1.500), `<text x="8" y="10" font-size="8" fill="${N}" font-weight="bold">G</text>` + P('M3 4v15M5 4v15M19 4v15'),
            P('M3 4v15M6 4v15M9 4v15M12 4v15M17 4v15',1.300), P('M3 4v15M5 4v15M7 4v15M9 4v15',1.800) + P('M14 4v15M19 4v15'), P('M3 4v15M8 4v15M10 4v15M13 4v15M19 4v15',1.200), P('M3 18L19 5M3 18L19 10M3 18H19'),
            P('M4 3v16h16M4 19L18 6M4 19L20 10M4 19L20 14M4 19L11 4'), P('M11 18V10M4 10l7 8 7-8'), P('M3 7h17l-7 13zM20 7l-9 5'), P('M4 5h15v13H4z',1.500),
            `<path d="M11 5l5 6h-3v6H9v-6H6z" fill="#e01010"/>`, `<path d="M11 18l5-6h-3V6H9v6H6z" fill="#108a20"/>`, P('M3 19L18 4') + `<path d="M13 8l6 6h-4v4h-4v-4H7z" fill="#e01010"/>`, `<text x="11" y="17" text-anchor="middle" font-size="15" font-weight="bold" fill="#111">A</text>`,
            `<text x="13" y="18" text-anchor="middle" font-size="15" font-weight="bold" fill="#111">A</text><path d="M3 6h6M6 3v6" stroke="#111"/>`, `<rect x="4" y="4" width="14" height="14" fill="#999" stroke="#ccc" stroke-width="2"/>`, `<path d="M5 5l12 12M17 5L5 17" stroke="#d02020" stroke-width="2"/>`, `<rect x="3" y="12" width="6" height="7" fill="none" stroke="#aaa"/><path d="M9 12l6-6" stroke="#aaa"/><circle cx="15" cy="6" r="4" fill="#f8e840"/>`,
            P('M4 3h14v17H4zM7 7h8M7 11h8M7 15h8',1.400), `<rect x="3" y="7" width="17" height="8" fill="none" stroke="${N}" stroke-width="1.500"/>` + P('M6 7v3M9 7v3M12 7v3M15 7v3M18 7v3'), `<rect x="0.500" y="0.500" width="21" height="21" fill="#f8f8f8" stroke="#bbb"/><rect x="4" y="5" width="14" height="12" fill="#fff" stroke="#222"/><rect x="7" y="7" width="5" height="7" fill="#109060"/>`, '',
            `<text x="11" y="17" text-anchor="middle" font-size="15" fill="#c83020">上</text>`, `<text x="11" y="17" text-anchor="middle" font-size="15" fill="#108a20">下</text>`, `<path d="M11 4l4 5H7z" fill="#e01010"/><path d="M7 10h8v3H7z" fill="#e8d020"/><path d="M6 14h10v4H6z" fill="#108a20"/>`, '',
            L(['买','#b8b8b8']), L(['卖','#b8b8b8']), L(['平','#b8b8b8']), ''
        ];
        document.getElementById('tools').innerHTML = tools.map((i) => `<svg width="23" height="22" viewBox="0 0 22 22">${i}</svg>`).join('');
    </script>
</body>
</html>
